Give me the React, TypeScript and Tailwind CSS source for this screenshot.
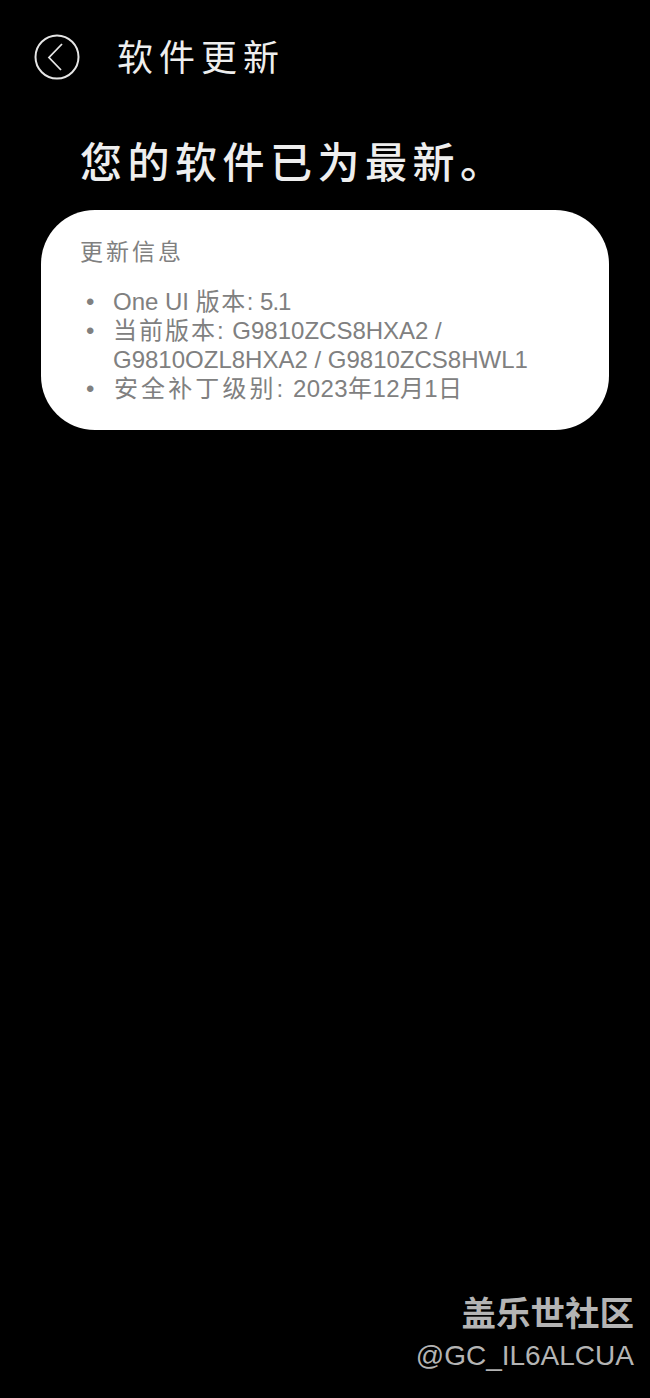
export default function App() {
  const cjk = "font-['Noto_Sans_CJK_SC','Noto_Sans',sans-serif]";
  const mixed = "font-['Liberation_Sans','Noto_Sans_CJK_SC',sans-serif]";
  return (
    <div className={`w-[650px] h-[1398px] bg-black flex flex-col ${cjk}`}>
      <header className="flex items-center pl-[34px] pt-[35px] h-[79px]">
        <svg width="46" height="46" viewBox="0 0 46 46" fill="none" stroke="#e6e6e6" className="shrink-0">
          <circle cx="23" cy="23" r="21.5" strokeWidth="2" />
          <path d="M28 10 L15 23.5 L27 36" strokeWidth="1.8" />
        </svg>
        <h1 className="ml-[37px] text-[36px] leading-[44px] font-normal tracking-[6px] text-[#eeeeee] whitespace-nowrap -mt-[4px]">软件更新</h1>
      </header>
      <h2 className="ml-[80px] mt-[55px] text-[42px] leading-[52px] font-medium tracking-[5.5px] text-[#eeeeee] whitespace-nowrap">您的软件已为最新。</h2>
      <section className="mx-[41px] mt-[24px] h-[220px] rounded-[54px] bg-white pl-[39px] pt-[24px] text-[#808080]">
        <h3 className="text-[23px] leading-[32px] font-normal tracking-[3px]">更新信息</h3>
        <ul className={`mt-[21px] text-[24px] leading-[29px] ${mixed}`}>
          <li className="flex">
            <span className="w-[33px] pl-[6px] shrink-0">•</span>
            <span className="whitespace-nowrap">One UI <span className="tracking-[1.5px]">版本</span>: <span className="tracking-[-1px]">5.1</span></span>
          </li>
          <li className="flex">
            <span className="w-[33px] pl-[6px] shrink-0">•</span>
            <span className="whitespace-nowrap"><span className="tracking-[2px]">当前版本:</span> G9810ZCS8HXA2 /<br />G9810OZL8HXA2 / G9810ZCS8HWL1</span>
          </li>
          <li className="flex">
            <span className="w-[33px] pl-[6px] shrink-0">•</span>
            <span className="whitespace-nowrap pl-[1px]"><span className="tracking-[3.1px]">安全补丁级别:</span> <span className="tracking-[0.4px]">2023年12月1日</span></span>
          </li>
        </ul>
      </section>
      <footer className="mt-auto mb-[23px] pr-[16px] flex flex-col items-end text-[#b4b4b4]">
        <div className="text-[34.5px] leading-[42px] font-bold">盖乐世社区</div>
        <div className="mt-[5px] text-[28px] leading-[38px] font-['Liberation_Sans',sans-serif]">@GC_IL6ALCUA</div>
      </footer>
    </div>
  );
}
